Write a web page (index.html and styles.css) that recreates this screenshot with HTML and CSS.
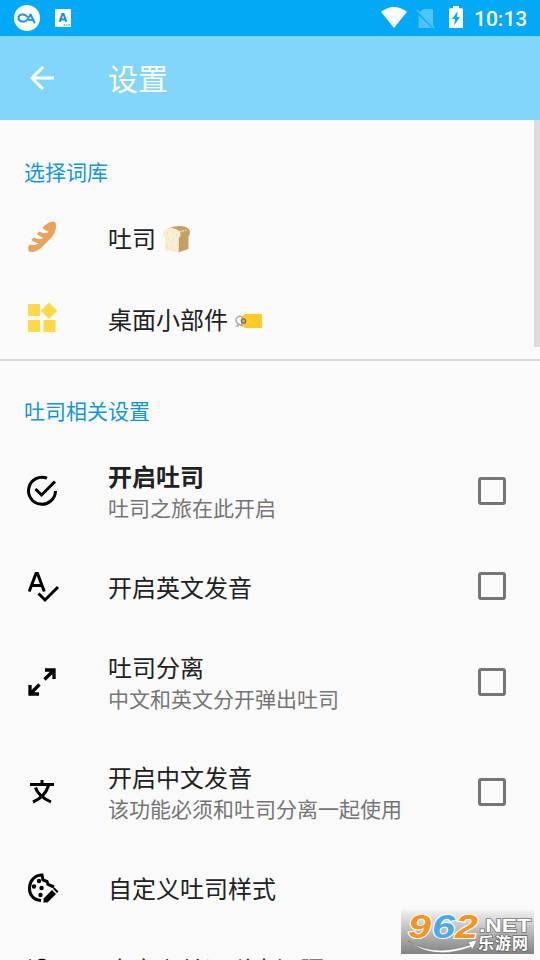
FILE: index.html
```html
<!DOCTYPE html>
<html lang="zh-CN">
<head>
<meta charset="utf-8">
<title>设置</title>
<link rel="stylesheet" href="styles.css">
</head>
<body>
<div class="screen">
  <header class="status">
    <svg class="st-logo" viewBox="0 0 26 26"><circle cx="13" cy="13" r="13" fill="#fff"/><path d="M13.500 14.500 16.500 9.500 20.500 17.500M15 15H18.500M13.500 14.500C11 18 4.500 17 4.500 13S10.500 8 13 11.500" fill="none" stroke="#2597dc" stroke-width="2.100" stroke-linecap="round" stroke-linejoin="round"/></svg>
    <svg class="st-app" viewBox="0 0 16 18"><rect width="16" height="18" rx="1" fill="#fff"/><path d="M4.700 12.800 7.400 5H8.600L11.300 12.800M5.500 10.500H10.500" fill="none" stroke="#1292dc" stroke-width="2"/><path d="M8.500 16H15" stroke="#4db5ef" stroke-width="1.500" stroke-dasharray="1.500 1"/></svg>
    <span class="grow"></span>
    <svg class="st-wifi" viewBox="0 0 26 21"><path d="M0 4.700Q13-4.700 26 4.700L13 21Z" fill="#fff"/></svg>
    <svg class="st-sim" viewBox="0 0 20 21"><path d="M7.500 1H16Q17 1 17 2V18L3 4.500ZM2.500 7V19Q2.500 20 3.500 20H16Z" fill="#4fc2fa"/><path d="M.7 2 18.500 20.300" stroke="#4fc2fa" stroke-width="1.500"/></svg>
    <svg class="st-bat" viewBox="0 0 14 22"><path d="M4 0H10V2.200H13Q14 2.200 14 3.200V21Q14 22 13 22H1Q0 22 0 21V3.200Q0 2.200 1 2.200H4Z" fill="#fff"/><path d="M8.800 5 3 13H6.200L5 19.500 11 11H7.800Z" fill="#03a9f5"/></svg>
    <span class="clock">10:13</span>
  </header>
  <div class="toolbar">
    <svg class="back" viewBox="0 0 24 24"><path d="M24 12H2M13 1 2 12 13 23" fill="none" stroke="#fff" stroke-width="3"/></svg>
    <h1>设置</h1>
  </div>
  <main>
    <h2 class="first">选择词库</h2>
    <div class="row">
      <svg class="icon" viewBox="0 0 36 36"><path d="M30 2.500C33.500 4 32.500 12 28 18L17 29C12 33.500 6 34 4.500 31.500 3.500 29.500 4.500 27 5.500 25.500Q10 27.500 14.500 24.500L8.500 22 7.500 20.500 10 18.500Q15 21.500 19.500 19L14 16 13 14.500 15.500 12.500Q20 15.500 25 13L19.500 10 18.500 8.500C23 4 27 2 30 2.500Z" fill="#e9a35b"/></svg>
      <div class="text"><div class="name">吐司 <svg class="toast" viewBox="0 0 28 28"><path d="M4 4Q12 0 21 1.500 27 3 27 7.500 27 10 25.500 11V24L15 27.500 10 12Z" fill="#c79d61"/><path d="M2 4.500Q7 2 13 4 18 6 17.500 10 17.500 12 15.800 13V27.500L2 25V13Q0 11 0 8.500 0 6 2 4.500Z" fill="#f6eed3"/><path d="M4 8h1M9 7h1M13 10h1M5 14h1M10 15h1M13 20h1M4 21h1M8 23h1" stroke="#dfcfa5"/><path d="M17 6.500 24 5" stroke="#ecd8b0" stroke-width="2" stroke-dasharray="1.500 1"/></svg></div></div>
    </div>
    <div class="row">
      <svg class="icon" viewBox="0 0 36 36"><path d="M4 4H16V16H4ZM4 20H16V32H4ZM19.500 20H31.500V32H19.500ZM25 2.500 33.200 10.700 25 18.900 16.800 10.700Z" fill="#fdd947"/></svg>
      <div class="text"><div class="name">桌面小部件 <svg class="tag" viewBox="0 0 28 16"><path d="M6 4 10 1H26Q27 1 27 2V14Q27 15 26 15H10L6 12Z" fill="#ffc928"/><path d="M.5 13H3V10.500Q-1 7 2.500 4 6 2 7.500 5M3 10.500 7.500 13" fill="none" stroke="#9a9b9b" stroke-width="1.200"/><circle cx="8.500" cy="8" r="2.200" fill="#c8a65b" stroke="#777" stroke-width="1.300"/></svg></div></div>
    </div>
    <div class="divider"></div>
    <h2>吐司相关设置</h2>
    <div class="row tall">
      <svg class="icon" viewBox="0 0 36 36"><g fill="none" stroke="#000" stroke-width="3"><path d="M23 5.200A13.500 13.500 0 1 0 31.500 18M11.500 16 17.500 22 31 8.500"/></g></svg>
      <div class="text"><div class="name bold">开启吐司</div><div class="desc">吐司之旅在此开启</div></div><span class="check"></span>
    </div>
    <div class="row">
      <svg class="icon" viewBox="0 0 36 36"><g fill="none" stroke="#000" stroke-width="3"><path d="M5.200 23.500 12 5.500H13.500L20.300 23.500M8 17.500H17.500M14.500 25.500 21 32 34 19"/></g></svg>
      <div class="text"><div class="name">开启英文发音</div></div><span class="check"></span>
    </div>
    <div class="row tall">
      <svg class="icon" viewBox="0 0 36 36"><path d="M21 6H30V15M30 6 20.500 15.500M6 21V30H15M6 30 15.500 20.500" fill="none" stroke="#000" stroke-width="3.300"/></svg>
      <div class="text"><div class="name">吐司分离</div><div class="desc">中文和英文分开弹出吐司</div></div><span class="check"></span>
    </div>
    <div class="row tall">
      <svg class="icon" viewBox="0 0 36 36"><path d="M6 10.500H30M18 6V11M11.500 13.500Q14 22 27 28M24.500 11.500Q21 23 9 28" fill="none" stroke="#000" stroke-width="3"/></svg>
      <div class="text"><div class="name">开启中文发音</div><div class="desc">该功能必须和吐司分离一起使用</div></div><span class="check"></span>
    </div>
    <div class="row">
      <svg class="icon" viewBox="0 0 36 36"><path d="M17 31.500C9 31 5 25 5.500 18.500 6 11 11 6 18 6L19 11 23 12.500 24 15.500 30 18" fill="none" stroke="#000" stroke-width="3"/><circle cx="15" cy="12" r="2.200"/><circle cx="10" cy="17.500" r="2.200"/><circle cx="17.500" cy="19" r="2.200"/><circle cx="16.500" cy="26" r="2.200"/><path d="M19.500 29.500 28 21 32 25 23.500 33.500H19.500ZM29 19.700 30.500 18.500 34.500 22.500 33 24Z"/></svg>
      <div class="text"><div class="name">自定义吐司样式</div></div>
    </div>
    <div class="row">
      <svg class="icon" viewBox="0 0 36 36"><path d="M5 10 8 13M14 11.500Q18 9 22 11.500" fill="none" stroke="#000" stroke-width="3"/><circle cx="18" cy="23" r="10" fill="none" stroke="#000" stroke-width="3"/></svg>
      <div class="text"><div class="name">自定义单词弹出间隔</div></div>
    </div>
  </main>
  <div class="scrollbar"></div>
  <div class="mark">
    <svg viewBox="0 0 133 44">
      <path d="M7 31Q32 47 69 35L67 32 76 30 71 40 70 37Q32 51 7 31Z" fill="#fff" stroke="#777" stroke-width=".6"/>
      <g class="digits"><text x="7" y="28" textLength="23" lengthAdjust="spacingAndGlyphs" fill="#f79320">9</text><text x="31" y="28" textLength="23" lengthAdjust="spacingAndGlyphs" fill="#4ba9e4">6</text><text x="54" y="28" textLength="23" lengthAdjust="spacingAndGlyphs" fill="#f79320">2</text></g>
      <text class="net" x="78" y="22" textLength="52" lengthAdjust="spacingAndGlyphs">.NET</text>
      <text class="cn" x="77" y="39" textLength="50">乐游网</text>
    </svg>
  </div>
</div>
</body>
</html>
```
FILE: styles.css
```css
* { box-sizing: border-box; }
body { margin: 0; background: #fafafa; font-family: Roboto, "Noto Sans CJK SC", sans-serif; }
.screen { position: relative; width: 540px; height: 960px; overflow: hidden; display: flex; flex-direction: column; }
svg { display: block; flex: none; }
.status { height: 36px; flex: none; background: #03a9f5; display: flex; align-items: center; padding: 0 12px 0 14px; }
.st-logo { width: 26px; height: 26px; }
.st-app { width: 16px; height: 18px; margin-left: 15px; }
.grow { flex: 1; }
.st-wifi { width: 26px; height: 21px; margin-top: -1px; }
.st-sim { width: 20px; height: 21px; margin-left: 9px; }
.st-bat { width: 14px; height: 22px; margin: -2px 0 0 13px; }
.clock { color: #fff; font-size: 21px; font-weight: 500; line-height: 36px; width: 54px; margin-left: 11px; padding-top: 2px; white-space: nowrap; }
.toolbar { height: 84px; flex: none; background: #82d5fb; display: flex; align-items: center; padding-left: 30px; }
.back { width: 24px; height: 24px; }
h1 { margin: 0 0 0 54px; padding-top: 3px; color: #fff; font-size: 30px; line-height: 44px; font-weight: 400; }
main { flex: none; }
h2 { margin: 0; height: 75px; padding: 36px 24px 0; color: #1296db; font-size: 21px; line-height: 30px; font-weight: 400; }
h2.first { height: 77px; padding-top: 38px; }
.row { height: 81px; display: flex; align-items: center; padding: 0 34px 0 24px; }
.row.tall { height: 110px; }
.icon { width: 36px; height: 36px; margin: 0 48px 1px 0; }
.tall .icon { margin-bottom: 0; }
.text { flex: 1; padding-top: 5px; }
.tall .text { padding-top: 5px; }
.name { display: flex; align-items: center; height: 32px; color: #212121; font-size: 24px; line-height: 32px; white-space: pre; }
.bold { font-weight: 700; }
.desc { color: #757575; font-size: 21px; line-height: 30px; padding-bottom: 2px; }
.toast { width: 28px; height: 28px; margin: -2px 0 0 1px; }
.tag { width: 28px; height: 16px; margin: 0 0 0 1px; }
.check { width: 28px; height: 28px; border: 3px solid #757575; border-radius: 3px; margin-bottom: 1px; }
.tall .check { margin-bottom: 0; }
.divider { height: 2px; background: #dadada; }
.scrollbar { position: absolute; top: 120px; right: 0; width: 6px; height: 227px; background: #dcdcdc; }
.mark { position: absolute; left: 401px; top: 910px; width: 133px; height: 44px; background: linear-gradient(#f1f1f1, #b8b8b8 50%, #828282); }
.mark svg { width: 133px; height: 44px; }
.mark text { font-family: "Liberation Sans", "Noto Sans CJK SC", sans-serif; font-weight: 700; }
.digits text { font-size: 34px; font-style: italic; stroke: #fff; stroke-width: 2px; paint-order: stroke; }
.mark .net { font-size: 19px; fill: #fff; stroke: #777; stroke-width: 1.5px; paint-order: stroke; }
.mark .cn { font-size: 16px; fill: #fff; stroke: #666; stroke-width: 1.5px; paint-order: stroke; }
```
